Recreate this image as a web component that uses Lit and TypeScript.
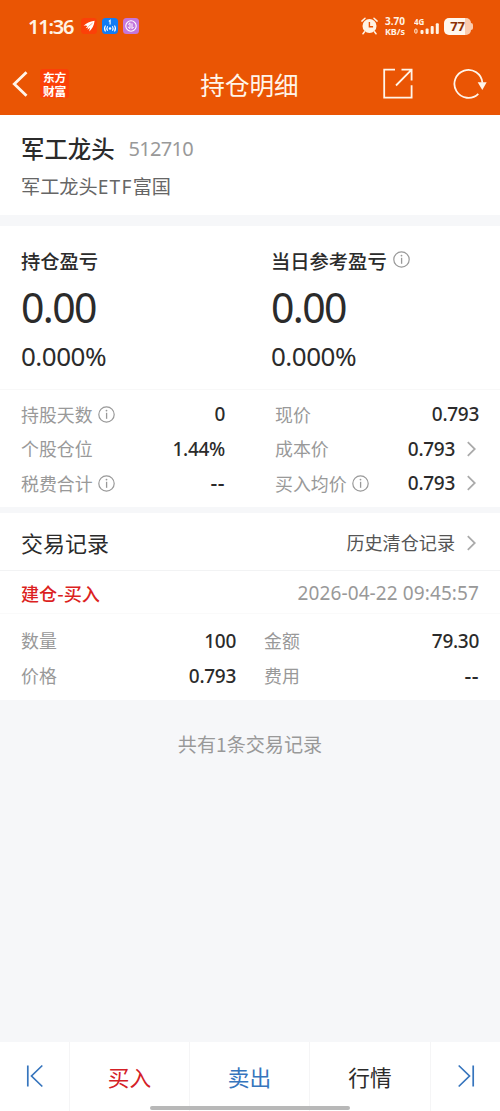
import { LitElement, html, css, nothing } from "lit";
import { customElement, property } from "lit/decorators.js";
import { classMap } from "lit/directives/class-map.js";

@customElement("info-icon")
class InfoIcon extends LitElement {
  static styles = css`
    :host { display: block; width: 17px; height: 17px; color: #999; }
    svg { display: block; }
  `;
  render() {
    return html`<svg width="17" height="17" viewBox="0 0 17 17" fill="none" stroke="currentColor">
      <circle cx="8.5" cy="8.5" r="7.7" stroke-width="1.2" />
      <path d="M8.6 6.8v6" stroke-width="1.3" />
      <circle cx="8.5" cy="4.6" r=".9" fill="currentColor" stroke="none" />
    </svg>`;
  }
}

@customElement("chevron-icon")
class ChevronIcon extends LitElement {
  static styles = css`
    :host { display: block; width: 9px; height: 16px; color: #aaa; }
    svg { display: block; }
  `;
  render() {
    return html`<svg width="9" height="16" viewBox="0 0 9 16" fill="none" stroke="currentColor" stroke-width="1.8">
      <path d="M.8 1.2 7.8 8 .8 14.8" />
    </svg>`;
  }
}

@customElement("data-row")
class DataRow extends LitElement {
  @property() label = "";
  @property() value = "";
  @property({ type: Boolean }) info = false;
  @property({ type: Boolean }) link = false;
  static styles = css`
    :host { display: flex; align-items: center; height: 35px; line-height: 35px; }
    .label { font-size: 17.9px; color: #999; white-space: nowrap; }
    info-icon { margin-left: 5px; }
    .value { margin-left: auto; padding-top: 1px; font-family: "Noto Sans", sans-serif; font-size: 19px; font-weight: 500; color: #2b2b2b; letter-spacing: -0.3px; }
    .empty { font-size: 21px; letter-spacing: 0.5px; }
    chevron-icon { margin: 0 3px 0 12px; }
  `;
  render() {
    const classes = { value: true, empty: this.value === "--" };
    return html`<span class="label">${this.label}</span>
      ${this.info ? html`<info-icon></info-icon>` : nothing}
      <span class=${classMap(classes)}>${this.value}</span>
      ${this.link ? html`<chevron-icon></chevron-icon>` : nothing}`;
  }
}

@customElement("status-bar")
class StatusBar extends LitElement {
  static styles = css`
    :host { display: flex; align-items: center; height: 52px; padding: 0 27px 0 28px; color: #fff3e4; }
    .time { font-family: "Noto Sans", sans-serif; font-size: 20px; font-weight: 600; line-height: 52px; letter-spacing: -1.2px; width: 53px; padding-top: 1px; }
    .apps { display: flex; gap: 5px; }
    svg { display: block; }
    .right { display: flex; align-items: center; margin-left: auto; }
    .speed { display: grid; width: 22px; margin-left: 6px; justify-items: center; font: 700 10px/11px "Noto Sans", sans-serif; }
    .speed .unit { font-size: 9px; line-height: 10px; }
    .signal { margin-left: 8px; }
    .gen { font: 700 8px "Noto Sans", sans-serif; }
    .battery { display: flex; align-items: center; justify-content: center; width: 27px; height: 17px; margin-left: 4px;
      border-radius: 5px; background: linear-gradient(90deg, #fff8ef 78%, #fbcbae 78%); color: #8c3206;
      font: 700 13px/17px "Noto Sans", sans-serif; letter-spacing: -0.3px; }
    .tip { width: 2px; height: 7px; background: #fbcbae; border-radius: 0 2px 2px 0; }
  `;
  render() {
    return html`
      <span class="time">11:36</span>
      <div class="apps">
        <svg width="16" height="16" viewBox="0 0 16 16">
          <rect width="16" height="16" rx="3.5" fill="#fb4008" />
          <path d="M2.6 7.8Q6.5 3.7 13.6 2.8 13 9 8.4 13.4 8.4 11.2 9.1 9.8L6.4 11.8 7.3 9.2 4.6 10.2 6.4 7.9Q4.9 7.3 2.6 7.8Z" fill="#fff" />
          <path d="m7.2 8.7 4.3-3.6" stroke="#fb4008" stroke-width=".5" />
        </svg>
        <svg width="16" height="16" viewBox="0 0 16 16" fill="none" stroke="#fff" stroke-width="1.1">
          <rect width="16" height="16" rx="3.5" fill="#117cf5" stroke="none" />
          <path d="m6.8 3.4 1.3-1v4.1" />
          <circle cx="8" cy="10.5" r="1.2" fill="#fff" stroke="none" />
          <path d="M5.6 8.2q-1.5 2.3 0 4.6M10.4 8.2q1.5 2.3 0 4.6M3.5 7.5q-2 3 0 6M12.5 7.5q2 3 0 6" />
        </svg>
        <svg width="16" height="16" viewBox="0 0 16 16" fill="none" stroke="#fff">
          <rect width="16" height="16" rx="3.5" fill="#c477dc" stroke="none" />
          <circle cx="8" cy="8" r="5.2" stroke-width="1.1" />
          <path d="M5.2 6.5 7 4.8v5.2M10.8 8.9 9 10.7V5.4M5.3 8.8q.5 1.6 2 1.9" stroke-width="1" />
        </svg>
      </div>
      <div class="right">
        <svg width="17" height="18" viewBox="0 0 17 18" fill="none" stroke="#fff3e4" stroke-linecap="round">
          <circle cx="8.5" cy="9" r="7" fill="#fff3e4" stroke="none" />
          <path d="M.9 4.1 4 1.3M16.1 4.1 13 1.3M3.5 14.8 2 16.8M13.5 14.8l1.5 2" stroke-width="1.5" />
          <path d="M8.4 5v4.7h3.7" stroke="#ea5504" stroke-width="1.4" stroke-linecap="butt" />
        </svg>
        <div class="speed"><span>3.70</span><span class="unit">KB/s</span></div>
        <svg class="signal" width="26" height="18" viewBox="0 0 26 18" fill="#fff3e4">
          <text class="gen" x="0" y="7.5">4G</text>
          <rect x=".8" y="12" width="2.2" height="4.2" rx="1" fill="none" stroke="#fff3e4" />
          <rect x="6.5" y="13" width="3" height="4" rx="1" />
          <rect x="11.6" y="11.5" width="3" height="5.5" rx="1" />
          <rect x="16.7" y="9" width="3" height="8" rx="1" />
          <rect x="21.8" y="6.3" width="3" height="10.7" rx="1" />
        </svg>
        <div class="battery">77</div><div class="tip"></div>
      </div>`;
  }
}

@customElement("nav-bar")
class NavBar extends LitElement {
  static styles = css`
    :host { display: grid; grid-template-columns: 1fr auto 1fr; align-items: center; height: 63px; padding: 0 13px 0 12px; color: #fff5ea; }
    svg { display: block; }
    .left { display: flex; align-items: center; gap: 12px; }
    .logo { display: grid; place-content: center; width: 29px; height: 29px; border-radius: 3px; background: #fb4008; color: #fff;
      font: 700 11.8px/14px "Noto Sans CJK SC", sans-serif; text-align: center; letter-spacing: -0.3px; }
    .title { font-size: 24.6px; line-height: 61px; padding-top: 2px; }
    .right { display: flex; align-items: center; justify-content: flex-end; gap: 40px; }
  `;
  render() {
    return html`
      <div class="left">
        <svg width="16" height="28" viewBox="0 0 16 28" fill="none" stroke="currentColor" stroke-width="2.8"><path d="M14.5 2.3 2.3 14 14.5 25.7" /></svg>
        <div class="logo"><span>东方</span><span>财富</span></div>
      </div>
      <div class="title">持仓明细</div>
      <div class="right">
        <svg width="30" height="31" viewBox="0 0 30 31" fill="none" stroke="currentColor" stroke-width="1.8">
          <path d="M12 1.6H1.2v28h27.4V17.2M13 17.5 28.4 1.8M18.5 1.6h10.1v10.8" />
        </svg>
        <svg width="34" height="32" viewBox="0 0 34 32" fill="none" stroke="currentColor" stroke-width="1.8">
          <path d="M25.3 25.8A14 14 0 1 1 29.4 14.8" />
          <path d="M24.7 14.2h9l-4.4 7.8Z" fill="currentColor" stroke="none" />
        </svg>
      </div>`;
  }
}

@customElement("app-root")
class AppRoot extends LitElement {
  static styles = css`
    :host { display: flex; flex-direction: column; height: 1111px; overflow: hidden; position: relative; background: #f6f7f9; color: #2b2b2b;
      font-family: "Noto Sans CJK SC", sans-serif; }
    * { box-sizing: border-box; }
    svg { display: block; }
    header { background: #ea5504; height: 115px; }
    section { background: #fff; padding: 0 21px; }
    .code, .amount, .percent, .date { font-family: "Noto Sans", sans-serif; }
    .stock { height: 100px; padding-top: 13px; }
    .name-line { display: flex; align-items: center; height: 40px; }
    .name { font-size: 23.4px; line-height: 40px; font-weight: 500; margin-right: 14px; }
    .code { font-size: 20px; line-height: 38px; padding-top: 2px; letter-spacing: -0.7px; color: #999; }
    .full { font-size: 19.2px; line-height: 36px; color: #666; }
    .latin { font-family: "Noto Sans", sans-serif; letter-spacing: 1.2px; }
    .profit { margin-top: 11px; height: 163px; display: grid; grid-template-columns: 250px 1fr; padding-top: 17px; }
    .label-line { display: flex; align-items: center; gap: 6px; height: 36px; font-size: 19.3px; font-weight: 500; }
    .label-line info-icon { margin-top: -3px; }
    .amount { font-size: 41px; line-height: 56px; letter-spacing: -1.6px; height: 56px; }
    .percent { font-size: 26px; line-height: 42px; letter-spacing: -0.5px; }
    .details { display: grid; grid-template-columns: 204px 204px; column-gap: 50px; height: 118px; border-top: 1px solid #f8f8f8; padding-top: 6.5px; grid-auto-rows: 34.7px; }
    .records { margin-top: 6px; height: 187px; padding: 0; }
    .rec-head { display: flex; align-items: center; justify-content: space-between; height: 58px; padding: 0 24px 0 21px; border-bottom: 1px solid #f2f3f4; }
    .rec-title { font-size: 22px; line-height: 58px; }
    .history { display: flex; align-items: center; gap: 12px; font-size: 18.1px; line-height: 57px; color: #555; padding-top: 2px; }
    .trade { display: flex; justify-content: space-between; height: 43px; line-height: 43px; padding: 0 21px; border-bottom: 1px solid #fafafa; }
    .side { font-size: 18.1px; font-weight: 500; color: #dc1f22; padding-top: 1px; }
    .date { font-size: 19px; color: #999; letter-spacing: 0.1px; padding-top: 1px; }
    .trade-data { display: grid; grid-template-columns: 215px 215px; column-gap: 28px; padding: 9px 21px 0; }
    .summary { margin-top: 23px; text-align: center; font-size: 19.1px; line-height: 42px; color: #999; }
    footer { margin-top: auto; height: 69px; display: grid; grid-template-columns: 70px 120px 120px 121px 69px; background: #fff; }
    footer > div { display: grid; place-items: center; height: 69px; border-right: 1px solid #f5f5f6; font-size: 21.7px; line-height: 68px; }
    footer > div:last-child { border-right: 0; }
    footer svg { margin-top: -2px; }
    .buy { color: #d42026; }
    .blue { color: #3675bd; }
    .home { position: absolute; left: 150px; bottom: 1px; width: 200px; height: 4px; border-radius: 2px; background: #b8b8b8; }
  `;
  render() {
    return html`
      <header><status-bar></status-bar><nav-bar></nav-bar></header>
      <section class="stock">
        <div class="name-line"><span class="name">军工龙头</span><span class="code">512710</span></div>
        <div class="full">军工龙头<span class="latin">ETF</span>富国</div>
      </section>
      <section class="profit">
        <div>
          <div class="label-line">持仓盈亏</div>
          <div class="amount">0.00</div>
          <div class="percent">0.000%</div>
        </div>
        <div>
          <div class="label-line">当日参考盈亏<info-icon></info-icon></div>
          <div class="amount">0.00</div>
          <div class="percent">0.000%</div>
        </div>
      </section>
      <section class="details">
        <data-row label="持股天数" value="0" info></data-row>
        <data-row label="现价" value="0.793"></data-row>
        <data-row label="个股仓位" value="1.44%"></data-row>
        <data-row label="成本价" value="0.793" link></data-row>
        <data-row label="税费合计" value="--" info></data-row>
        <data-row label="买入均价" value="0.793" info link></data-row>
      </section>
      <section class="records">
        <div class="rec-head">
          <span class="rec-title">交易记录</span>
          <span class="history">历史清仓记录<chevron-icon></chevron-icon></span>
        </div>
        <div class="trade"><span class="side">建仓-买入</span><span class="date">2026-04-22 09:45:57</span></div>
        <div class="trade-data">
          <data-row label="数量" value="100"></data-row>
          <data-row label="金额" value="79.30"></data-row>
          <data-row label="价格" value="0.793"></data-row>
          <data-row label="费用" value="--"></data-row>
        </div>
      </section>
      <div class="summary">共有1条交易记录</div>
      <footer>
        <div class="blue"><svg width="18" height="24" viewBox="0 0 18 24" fill="none" stroke="currentColor" stroke-width="1.7"><path d="M1.8 1.5v21M16.3 1.5 5.5 12l10.8 10.5" /></svg></div>
        <div class="buy">买入</div>
        <div class="blue">卖出</div>
        <div>行情</div>
        <div class="blue"><svg width="18" height="24" viewBox="0 0 18 24" fill="none" stroke="currentColor" stroke-width="1.7"><path d="M16.2 1.5v21M1.7 1.5 12.5 12 1.7 22.5" /></svg></div>
      </footer>
      <div class="home"></div>`;
  }
}
